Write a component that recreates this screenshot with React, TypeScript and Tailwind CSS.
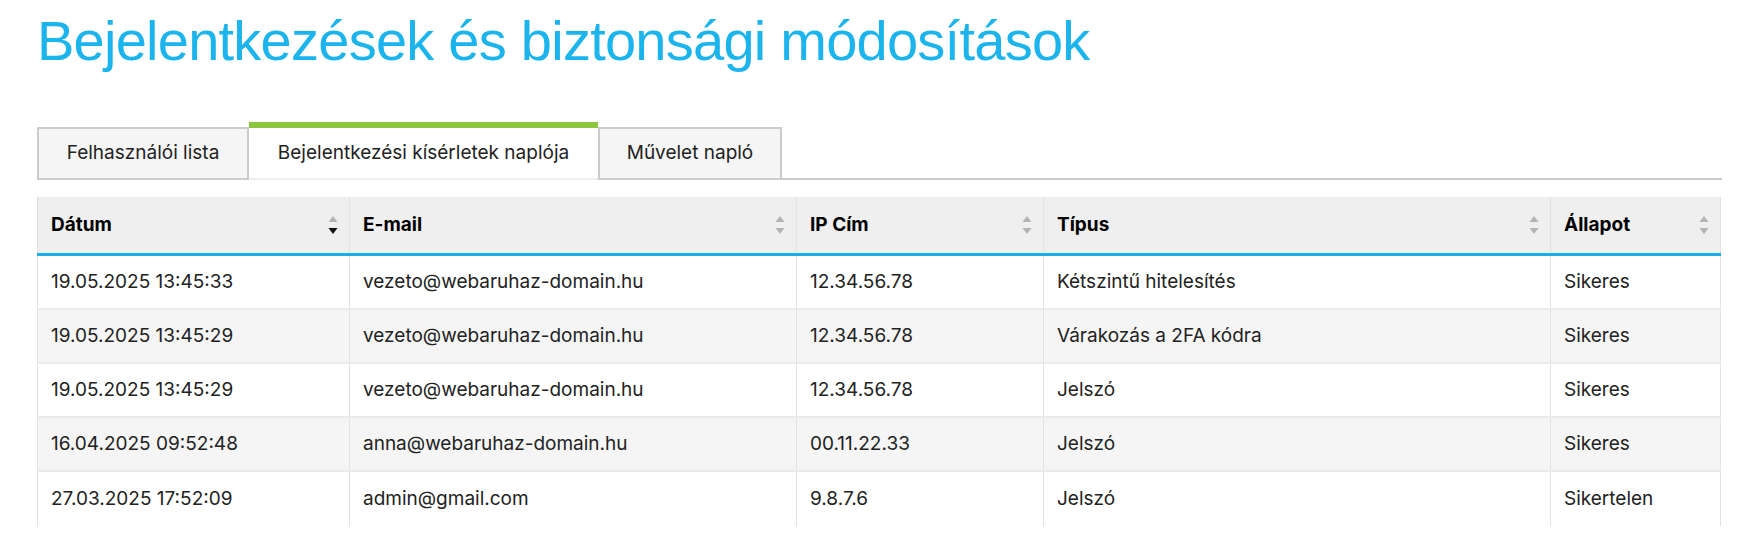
import React from "react";

type Row = {
  date: string;
  email: string;
  ip: string;
  type: string;
  status: string;
};

const rows: Row[] = [
  { date: "19.05.2025 13:45:33", email: "vezeto@webaruhaz-domain.hu", ip: "12.34.56.78", type: "Kétszintű hitelesítés", status: "Sikeres" },
  { date: "19.05.2025 13:45:29", email: "vezeto@webaruhaz-domain.hu", ip: "12.34.56.78", type: "Várakozás a 2FA kódra", status: "Sikeres" },
  { date: "19.05.2025 13:45:29", email: "vezeto@webaruhaz-domain.hu", ip: "12.34.56.78", type: "Jelszó", status: "Sikeres" },
  { date: "16.04.2025 09:52:48", email: "anna@webaruhaz-domain.hu", ip: "00.11.22.33", type: "Jelszó", status: "Sikeres" },
  { date: "27.03.2025 17:52:09", email: "admin@gmail.com", ip: "9.8.7.6", type: "Jelszó", status: "Sikertelen" },
];

const columns = [
  { label: "Dátum", sorted: true },
  { label: "E-mail", sorted: false },
  { label: "IP Cím", sorted: false },
  { label: "Típus", sorted: false },
  { label: "Állapot", sorted: false },
];

const gridCols = "grid grid-cols-[313px_447px_247px_507px_170px]";

function SortIcon({ active }: { active: boolean }) {
  return (
    <svg width="10" height="18" viewBox="0 0 10 18" className="shrink-0">
      <path d="M5 0 L9.5 6 L0.5 6 Z" fill="#b3b3b3" />
      <path d="M0.5 12 L9.5 12 L5 18 Z" fill={active ? "#111111" : "#b3b3b3"} />
    </svg>
  );
}

export default function App() {
  return (
    <div className="min-h-[557px] bg-white pl-[37px] pr-[34px] font-['Inter',sans-serif] text-[#222]">
      <h1 className="pt-[13px] font-['Liberation_Sans',Arial,sans-serif] text-[56px] leading-[56px] tracking-[-0.75px] text-[#1cb4ec]">
        Bejelentkezések és biztonsági módosítások
      </h1>

      {/* Tabs */}
      <div className="mt-[53px] flex items-end text-[19px]">
        <div className="flex h-[53px] w-[212px] items-center justify-center border-2 border-[#cccccc] bg-[#f5f5f5]">
          Felhasználói lista
        </div>
        <div className="flex h-[58px] w-[349px] items-center justify-center border-t-[6px] border-b-2 border-t-[#8cc63f] border-b-[#eeeeee] bg-white">
          Bejelentkezési kísérletek naplója
        </div>
        <div className="flex h-[53px] w-[184px] items-center justify-center border-2 border-[#cccccc] bg-[#f5f5f5]">
          Művelet napló
        </div>
        <div className="h-[2px] flex-1 bg-[#cccccc]" />
      </div>

      {/* Table */}
      <div className="mt-[17px] w-[1684px] text-[19px]">
        <div className={`${gridCols} h-[59px] border-b-[3px] border-[#1aaee6] bg-[#efefef]`}>
          {columns.map((c, j) => (
            <div
              key={c.label}
              className={`flex items-center justify-between border-r border-[#e2e2e2] pl-[13px] pr-[11px] font-bold text-black ${j === 0 ? "border-l" : ""}`}
            >
              <span>{c.label}</span>
              <SortIcon active={c.sorted} />
            </div>
          ))}
        </div>
        {rows.map((r, i) => (
          <div
            key={i}
            className={`${gridCols} h-[54px] ${i < rows.length - 1 ? "border-b-2 border-[#ebebeb]" : ""} ${i % 2 === 1 ? "bg-[#f5f5f5]" : "bg-white"}`}
          >
            {[r.date, r.email, r.ip, r.type, r.status].map((v, j) => (
              <div
                key={j}
                className={`flex items-center border-r border-[#e2e2e2] pl-[13px] ${j === 0 ? "border-l" : ""}`}
              >
                {v}
              </div>
            ))}
          </div>
        ))}
      </div>
    </div>
  );
}
